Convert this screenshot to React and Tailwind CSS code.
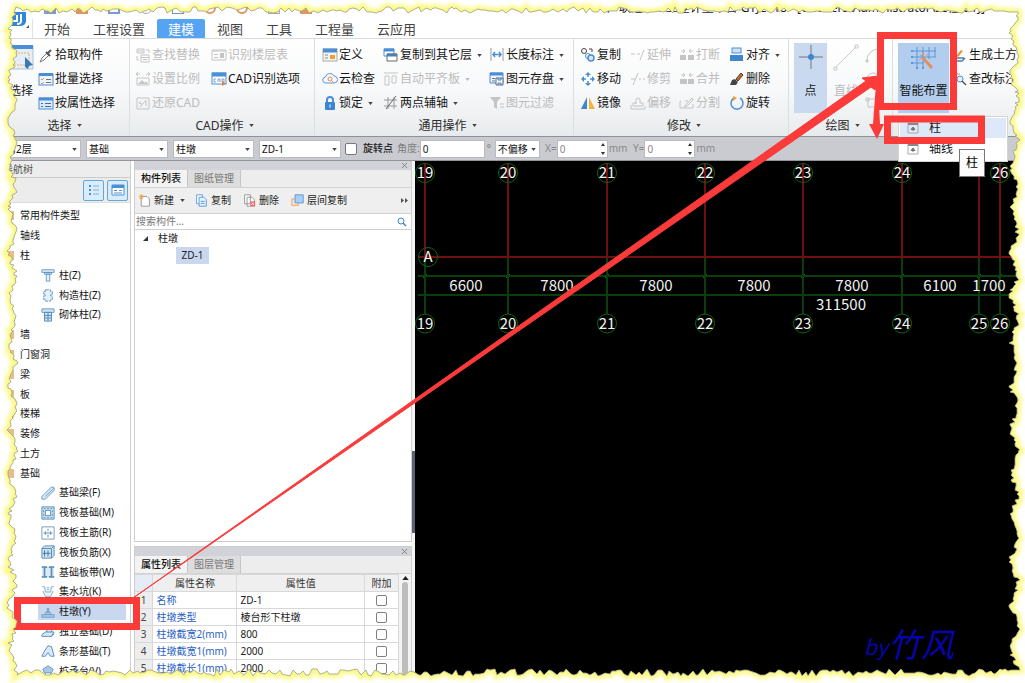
import { useState } from "react";

const TABS = ["开始", "工程设置", "建模", "视图", "工具", "工程量", "云应用"];

const BLUE = "#4a8fd6";
const GREY = "#c4c4c4";

const ICONS = {
  picker: (
    <>
      <path d="M2 15l2-4 5-5 2 2-5 5z" fill="#fff" stroke="#777" />
      <path d="M8 5l4 4M10 6l3-3" stroke="#555" strokeWidth="2" />
    </>
  ),
  batch: (
    <>
      <rect x="1" y="3" width="14" height="11" fill="#eef4fb" stroke={BLUE} />
      <path d="M1 3.5h14" stroke={BLUE} strokeWidth="3" />
      <path d="M3 8l1 1 2-2M3 12l1 1 2-2" stroke="#e29a3c" />
      <path d="M8 8.5h5M8 11.5h5" stroke="#777" />
    </>
  ),
  byProp: (
    <>
      <rect x="1" y="3" width="14" height="11" fill="#dceafa" stroke={BLUE} />
      <path d="M1 4h14" stroke={BLUE} strokeWidth="3" />
      <path d="M3 8.5h2M3 11.5h2M7 8.5h6M7 11.5h6" stroke="#3a6ea5" />
    </>
  ),
  findReplace: (
    <>
      <path d="M2 2h7v4H2zM2 4h7M6 8h8v7H6zM6 10.500h8M8 12.500h4" stroke={GREY} />
      <path d="M11 3h3v3M2 9v4h2" stroke={GREY} />
    </>
  ),
  floorTable: (
    <>
      <path d="M1 3h14v10H1zM1 4h14M3 7.500h4M3 10.500h4" stroke={GREY} />
      <path d="M9 6h4v5H9z" fill={GREY} />
    </>
  ),
  ratio: (
    <>
      <path d="M1 3h4M11 3h4M3 1L1 3l2 2M13 1l2 2-2 2" stroke={GREY} />
      <path d="M2 7h12v7H2z" stroke={GREY} />
      <path d="M3 13l4-4 3 3 1-2 2 3z" fill={GREY} />
    </>
  ),
  cadOptions: (
    <>
      <rect x="1" y="2" width="14" height="11" fill="#fff" stroke={BLUE} />
      <path d="M1 3.5h14" stroke={BLUE} strokeWidth="4" />
      <path d="M5 8H3v3h2M7 11V8h2v3M11 8v3h2V8z" stroke="#7aa5cf" />
      <path d="M11 10l4 2.500-4 2.500z" fill="#f07840" />
    </>
  ),
  restore: (
    <>
      <path d="M2 3h12v11H2z" stroke={GREY} />
      <path d="M5 12l6-7M6 6l-2 2 3 1M11 5v6" stroke={GREY} />
    </>
  ),
  define: (
    <>
      <rect x="1" y="2" width="14" height="12" fill="#f4f4f4" stroke="#aaa" />
      <path d="M1 3.5h14" stroke={BLUE} strokeWidth="4" />
      <path d="M3 8h3M3 11h3" stroke="#888" />
      <rect x="8" y="8" width="5" height="4" fill="#efa02f" />
    </>
  ),
  cloud: (
    <>
      <path d="M4 12a3 3 0 01-.5-6A4.500 4.500 0 0112 5a3.500 3.500 0 010 7z" fill="#f2f8fe" stroke="#5d9bd8" />
      <circle cx="8" cy="8" r="2" stroke="#ee8a48" />
      <path d="M9.500 9.500l2 2" stroke="#ee8a48" />
    </>
  ),
  lock: (
    <>
      <path d="M5 8V5a3 3 0 016 0v3" stroke={BLUE} strokeWidth="2" />
      <rect x="3" y="7" width="10" height="8" rx="1" fill="#3b85d6" />
      <path d="M8 9.500v3" stroke="#fff" />
    </>
  ),
  copyFloor: (
    <>
      <path d="M1 2h10v7H1z" fill="#fff" stroke={BLUE} />
      <path d="M1 3h10" stroke={BLUE} strokeWidth="3" />
      <path d="M4 7h10v7H4z" fill="#fff" stroke="#666" />
      <path d="M4 8h10" stroke="#4d7fb5" strokeWidth="3" />
    </>
  ),
  alignSlab: <path d="M1 2h14M2 5h4v9H2zM9 5h4v7H9z" stroke={GREY} />,
  axis: (
    <>
      <path d="M5 2v12M11 2v12M1 5h13M1 11h13" stroke="#999" />
      <path d="M3 14L13 1" stroke="#666" />
    </>
  ),
  dimension: (
    <>
      <path d="M2 1v13M14 1v13" stroke="#999" />
      <path d="M4 7.500h8M6 5L4 7.500 6 10M10 5l2 2.500-2 2.500" stroke={BLUE} strokeWidth="1.500" />
    </>
  ),
  store: (
    <>
      <path d="M1 2h13v10H1z" fill="#eef5fc" stroke={BLUE} />
      <path d="M1 3h13" stroke={BLUE} strokeWidth="3" />
      <path d="M3 7.500h3M3 10h3" stroke="#777" />
      <path d="M7 7h7v7H7z" fill="#fff" stroke="#4a6f97" />
      <path d="M9 7v2h3V7M9 14v-2h3v2" stroke="#4a6f97" />
    </>
  ),
  filter: (
    <>
      <path d="M1 2h11l-4 5v7l-3-2V7z" fill={GREY} />
      <path d="M11 9h4M11 12h4" stroke={GREY} />
    </>
  ),
  copy: (
    <>
      <circle cx="4" cy="4" r="2.500" stroke="#444" />
      <circle cx="8" cy="9" r="2.500" fill="#fff" stroke={BLUE} />
      <circle cx="11" cy="11" r="3" fill="#d6e8fa" stroke={BLUE} strokeWidth="1.500" />
      <path d="M9 2h3v3" stroke="#444" />
    </>
  ),
  move: (
    <>
      <path d="M8 3v3M8 10v3M3 8h3M10 8h3" stroke={BLUE} strokeWidth="1.500" />
      <path d="M8 1l3 3H5zM8 15l3-3H5zM1 8l3-3v6zM15 8l-3-3v6z" fill={BLUE} />
    </>
  ),
  mirror: (
    <>
      <path d="M7 2v12H1z" fill="#3f86cf" />
      <path d="M9 2v12h6z" fill="#f0b53c" />
    </>
  ),
  extend: <path d="M1 7h4M7 7h3M10 13l4-10" stroke={GREY} />,
  trim: <path d="M1 8h4M9 8h2M13 8h2M3 14L8 2" stroke={GREY} />,
  offset: <path d="M6 9V5a2 2 0 014 0v3h3v3H3V8h3M1 10v4h14v-3" stroke={GREY} />,
  breakIcon: (
    <>
      <path d="M1 8h6v5H1zM9 8h6v5H9z" fill={GREY} />
      <path d="M2 4h3M11 4h3M4 2l2 2-2 2M12 2l-2 2 2 2" stroke={GREY} />
    </>
  ),
  merge: (
    <>
      <path d="M1 8h7v5H1zM9 8h6v5H9z" fill={GREY} />
      <path d="M2 4h4M10 4h4M4 2l2 2-2 2M12 2l-2 2 2 2" stroke={GREY} />
    </>
  ),
  split: <path d="M2 6H1v7h13V9M5 12l8-9 1 2-7 7zM6 6h3" stroke={GREY} />,
  align: (
    <>
      <rect x="3" y="1" width="9" height="5" fill="#cde2f7" stroke={BLUE} />
      <rect x="1" y="8" width="13" height="6" fill="#3f86cf" />
    </>
  ),
  erase: (
    <>
      <path d="M7 8l5-6 2 2-5 6z" fill="#b0703c" stroke="#6b3a1c" />
      <path d="M3 9l3-1 3 3-2 3H1z" fill="#444" />
    </>
  ),
  rotate: (
    <>
      <path d="M5 3a6 6 0 106-0" stroke={BLUE} strokeWidth="1.500" />
      <path d="M4 1l4 2-4 3z" fill="#ee9a3c" />
    </>
  ),
  earth: (
    <>
      <path d="M4 9l5-6 2 1-5 6z" fill="#ee8f3a" />
      <path d="M1 8l2 3h9M1 14h9l3-3" stroke="#4a7fb5" strokeWidth="1.500" />
    </>
  ),
  checkNote: (
    <>
      <path d="M2 3h6M2 6h3" stroke="#ee8f3a" />
      <circle cx="8" cy="8" r="3" fill="#e7f2fd" stroke={BLUE} />
      <path d="M10 10l4 4" stroke="#555" strokeWidth="1.500" />
    </>
  ),
  newDoc: (
    <>
      <path d="M4 3h7l3 3v9H4z" fill="#fff" stroke="#888" />
      <path d="M4 0v7M1 3.500h6M2 1l4 5M6 1L2 6" stroke="#f0a02c" />
    </>
  ),
  copyDoc: (
    <>
      <path d="M2 1h7v11H2z" fill="#fff" stroke={BLUE} />
      <path d="M5 4h6l3 3v8H5z" fill="#e6f1fc" stroke={BLUE} />
      <path d="M7 9h5M7 11.500h5" stroke={BLUE} />
    </>
  ),
  deleteDoc: (
    <>
      <path d="M2 1h7v11H2zM5 4h6l3 3v8H5z" fill="#fff" stroke="#888" />
      <path d="M9 9h6v6H9z" fill="#e8686c" />
      <path d="M10.500 10.500l3 3M13.500 10.500l-3 3" stroke="#fff" />
    </>
  ),
  layerCopy: (
    <>
      <path d="M1 6h8v8H1z" fill="#f7e3d0" stroke="#ee9a50" />
      <path d="M5 1h10v10H5z" fill="#a9cff5" stroke={BLUE} />
    </>
  ),
  column: <path d="M1 2h14v3H1zM4 5h8v2H4zM6 7h4v8H6z" fill="#e4f0fa" stroke="#5b93bd" />,
  structColumn: <path d="M5 2h6v2h2v3h-2v2h2v4h-2v2H5v-2H3V9h2V7H3V4h2z" fill="#e4f0fa" stroke="#5b93bd" strokeDasharray="4 1" />,
  masonryColumn: (
    <>
      <path d="M1 1h14v4H1z" fill="#cfe2f2" stroke="#5b93bd" />
      <path d="M4 5h8v10H4zM4 8.500h8M4 11.500h8M8 5v10" fill="#cfe2f2" stroke="#4a86b5" />
    </>
  ),
  beam: <path d="M1 12L12 1l3 1v3L5 15H1z M5 12L14 3" fill="#d8e9f7" stroke="#5b93bd" />,
  raft: (
    <>
      <path d="M1 1h14v14H1z" fill="#cfe2f2" stroke="#4a86b5" />
      <path d="M5 5h6v6H5z" fill="#fff" stroke="#4a86b5" />
      <path d="M3 3h10v10H3z" stroke="#4a86b5" strokeDasharray="2 2" />
    </>
  ),
  raftMain: (
    <>
      <path d="M1 1h14v14H1z" fill="#fff" stroke="#6d93b0" />
      <path d="M8 3v3M8 10v3M3 8h10M5 6v4M11 6v4" stroke="#4a86b5" />
    </>
  ),
  raftNeg: (
    <>
      <path d="M1 4h11v11H1zM1 4l3-3h11v11l-3 3M12 4l3-3" fill="#cfe2f2" stroke="#4a86b5" />
      <path d="M4 6v7M8 6v7M2 9.500h9" stroke="#37719f" />
    </>
  ),
  strip: (
    <>
      <path d="M1 2h14v12H1z" fill="#deebf6" />
      <path d="M1 2.500h6M9 2.500h6M1 13.500h6M9 13.500h6M4 3v10M12 3v10" stroke="#5b93bd" strokeWidth="2" />
    </>
  ),
  pit: <path d="M1 2h3l1 6h6l1-6h3M2 7l3 6h6l3-6M7 3h2M7 5h2" fill="#e9f3fb" stroke="#7fa8c6" />,
  pier: <path d="M1 11h14v3H1zM4 11l2-3h4l2 3M7 4h2v4H7z" fill="#a9c8e4" stroke="#6c9cc4" />,
  isolated: <path d="M1 11l4-3h10l-3 5H1zM6 8l2-4h5l-1 4M12 13l3-3" fill="#d8e9f7" stroke="#4a86b5" />,
  stripFound: <path d="M1 14l3-6 4-6 4 1 3 11h-4l-3-4-3 4z" fill="#d8e9f7" stroke="#4a86b5" />,
  pileCap: <path d="M8 2l6 4-2 4H4L2 6zM5 10v5M11 10v5" fill="#a9c8e4" stroke="#5b93bd" />,
};

function Icon({ name, size = "size-4" }) {
  return (
    <svg viewBox="0 0 16 16" fill="none" className={`${size} shrink-0`}>
      {ICONS[name]}
    </svg>
  );
}

function Caret({ className = "text-[#444]" }) {
  return (
    <svg viewBox="0 0 6 4" className={`w-[5px] h-[3px] shrink-0 ${className}`}>
      <path d="M0 0h6L3 4z" fill="currentColor" />
    </svg>
  );
}

function Command({ icon, label, disabled, caret }) {
  return (
    <button
      disabled={disabled}
      className={`flex items-center h-6 text-[12px] whitespace-nowrap ${disabled ? "text-[#bcbcbc]" : "text-[#161616]"}`}
    >
      <Icon name={icon} />
      <span className="px-px">{label}</span>
      {caret && <span className="pl-[4px]"><Caret className={disabled ? "text-[#bbb]" : "text-[#444]"} /></span>}
    </button>
  );
}

function Group({ label, className, children }) {
  return (
    <section className={`relative flex flex-col shrink-0 border-r border-[#dcdfe2] pt-[4px] ${className}`}>
      <div className="flex h-[72px]">{children}</div>
      <div className="flex flex-1 items-center justify-center gap-[5px] text-[12px] text-[#2b2b2b]">
        {label}
        <Caret />
      </div>
    </section>
  );
}

function Column({ className = "", items }) {
  return (
    <div className={`flex flex-col shrink-0 ${className}`}>
      {items.map(([icon, label, disabled, caret]) => (
        <Command key={label} icon={icon} label={label} disabled={disabled} caret={caret} />
      ))}
    </div>
  );
}

function MenuIcon() {
  return (
    <svg viewBox="0 0 12 12" fill="none" className="size-3">
      <path d="M1 1h10v10H1z" stroke="#aaa" />
      <path d="M1 2h10" stroke="#888" strokeWidth="2" />
      <path d="M6 5l2 2.500H4zM6 7v2" fill="#777" stroke="#777" />
    </svg>
  );
}

function Ribbon() {
  return (
    <div className="flex h-[99px] shrink-0 border-y border-t-[#dadada] border-b-[#8f9196] bg-gradient-to-b from-white via-[#f8f9fa] to-[#e8ebed]">
      <Group label="选择" className="w-[130px]">
        <button className="flex flex-col items-center w-[38px] pl-[4px] pt-px text-[12px] text-[#222]">
          <svg viewBox="0 0 26 26" fill="none" className="size-[26px]">
            <path d="M1 2h24v23H1z" fill="#e6eff9" stroke="#a9c1dc" />
            <path d="M1 3h24" stroke={BLUE} strokeWidth="4" />
            <path d="M4 9h17v12H4z" stroke="#e8b04c" strokeDasharray="2 1" />
            <path d="M17 13l8 8-4 1-1 3-3-2z" fill="#3a76b8" />
          </svg>
          <span className="whitespace-nowrap pt-[12px]">选择</span>
        </button>
        <Column
          items={[["picker", "拾取构件"], ["batch", "批量选择"], ["byProp", "按属性选择"]]}
        />
      </Group>
      <Group label="CAD操作" className="w-[185px] pl-[5px]">
        <Column
          className="w-[76px]"
          items={[["findReplace", "查找替换", true], ["ratio", "设置比例", true], ["restore", "还原CAD", true]]}
        />
        <Column items={[["floorTable", "识别楼层表", true], ["cadOptions", "CAD识别选项"]]} />
      </Group>
      <Group label="通用操作" className="w-[259px] pl-[7px]">
        <Column className="w-[61px]" items={[["define", "定义"], ["cloud", "云检查"], ["lock", "锁定", false, true]]} />
        <Column
          className="w-[106px]"
          items={[["copyFloor", "复制到其它层", false, true], ["alignSlab", "自动平齐板", true, true], ["axis", "两点辅轴", false, true]]}
        />
        <Column
          items={[["dimension", "长度标注", false, true], ["store", "图元存盘", false, true], ["filter", "图元过滤", true]]}
        />
      </Group>
      <Group label="修改" className="w-[215px] pl-[6px]">
        <Column className="w-[50px]" items={[["copy", "复制"], ["move", "移动"], ["mirror", "镜像"]]} />
        <Column className="w-[49px]" items={[["extend", "延伸", true], ["trim", "修剪", true], ["offset", "偏移", true]]} />
        <Column className="w-[50px]" items={[["breakIcon", "打断", true], ["merge", "合并", true], ["split", "分割", true]]} />
        <Column items={[["align", "对齐", false, true], ["erase", "删除"], ["rotate", "旋转"]]} />
      </Group>
      <Group label="绘图" className="w-[104px] pl-[5px] pr-px">
        <button className="flex flex-col items-center w-[33px] h-[70px] bg-[#c9d9ef] text-[12px] text-[#161616]">
          <svg viewBox="0 0 28 28" className="size-7" fill="none">
            <path d="M14 2v24M2 14h24" stroke="#777" />
            <circle cx="14" cy="14" r="3" fill="#3d86d6" />
          </svg>
          <span className="pt-[11px]">点</span>
        </button>
        <button disabled className="flex flex-col items-center w-[38px] text-[12px] text-[#bcbcbc]">
          <svg viewBox="0 0 28 28" className="size-7" fill="none">
            <path d="M4 24L24 4M2 24h3v3H2zM23 2h3v3h-3z" stroke="#c8c8c8" />
          </svg>
          <span className="pt-[11px]">直线</span>
        </button>
        <div className="flex flex-col">
          <button disabled aria-label="弧" className="h-6 w-4">
            <svg viewBox="0 0 16 16" fill="none" className="size-4"><path d="M2 14C2 7 7 2 14 2M1 13h2v2H1z" stroke={GREY} /></svg>
          </button>
          <button disabled aria-label="圆" className="h-6 w-4">
            <svg viewBox="0 0 16 16" fill="none" className="size-4"><circle cx="8" cy="8" r="6" stroke={GREY} /></svg>
          </button>
          <button disabled aria-label="矩形" className="h-6 w-4">
            <svg viewBox="0 0 16 16" fill="none" className="size-4"><path d="M3 4h10v8H3zM1 3h3v3H1z" stroke={GREY} /></svg>
          </button>
        </div>
      </Group>
      <section className="relative flex flex-1 pl-[5px] pt-1">
        <button className="flex flex-col items-center w-[51px] h-[70px] shrink-0 bg-[#b3cdee] text-[12px] text-[#111] whitespace-nowrap">
          <svg viewBox="0 0 28 28" className="size-7" fill="none">
            <path d="M7 4v20M13 4v20M19 4v12M25 4v10M2 8h24M2 14h24M2 20h12" stroke="#5c97d6" />
            <path d="M1 7h2v2H1zM1 13h2v2H1zM1 19h2v2H1zM6 24h2v2H6zM12 24h2v2h-2z" fill="#5c97d6" />
            <path d="M13 15l9 10" stroke="#e0905a" strokeWidth="3" />
            <path d="M10 12l3 1M13 9l1 3M18 11l-2 2M9 17l3-2" stroke="#e0905a" />
          </svg>
          <span className="pt-[11px]">智能布置</span>
        </button>
        <div className="flex flex-col pl-[3px]">
          <Command icon="earth" label="生成土方" />
          <Command icon="checkNote" label="查改标注" />
        </div>
        <div role="menu" className="absolute left-[5px] top-[77px] z-10 w-[110px] border border-[#d5d5d5] bg-white p-px text-[12px] text-[#161616]">
          <button role="menuitem" className="flex items-center w-full h-5 gap-[10px] pl-[7px] bg-[#dde8f8]">
            <MenuIcon />柱
          </button>
          <button role="menuitem" className="flex items-center w-full h-[22px] gap-[10px] pl-[7px]">
            <MenuIcon />轴线
          </button>
        </div>
        <div role="tooltip" className="absolute left-[66px] top-[110px] z-20 w-[26px] h-7 border border-[#777] bg-[#fcfcfd] text-[12px] leading-[26px] text-center text-black">
          柱
        </div>
      </section>
    </div>
  );
}

function Dropdown({ label, value, className }) {
  return (
    <div className={`relative shrink-0 ${className}`}>
      <select aria-label={label} className="block w-full h-[18px] appearance-none bg-white border border-[#b9bbc0] pl-[2px] text-[10px] leading-4 text-[#111]">
        <option>{value}</option>
      </select>
      <span className="absolute right-[4px] top-[8px] pointer-events-none flex"><Caret /></span>
    </div>
  );
}

function Stepper({ label }) {
  return (
    <div className="flex items-center text-[10px] text-[#8a8a8a]">
      <label htmlFor={`offset-${label}`} className="w-[13px] text-right">{label}=</label>
      <div className="relative">
        <input id={`offset-${label}`} defaultValue="0" className="block w-[51px] h-[18px] bg-white border border-[#b9bbc0] pl-[2px] text-[10px]" />
        <svg viewBox="0 0 6 12" className="absolute right-[2px] top-[3px] w-[6px] h-3">
          <path d="M1 3l2-3 2 3zM1 9l2 3 2-3z" fill="#333" />
        </svg>
      </div>
      <span className="pl-px">mm</span>
    </div>
  );
}

function OptionsBar() {
  return (
    <div className="flex items-center h-6 shrink-0 bg-[#c9cbd1] border-b border-[#93959b] text-[10px] text-[#222]">
      <div className="flex gap-[5px]">
        <Dropdown label="楼层" value="第2层" className="w-[81px] pl-[3px]" />
        <Dropdown label="构件类别" value="基础" className="w-[82px]" />
        <Dropdown label="构件类型" value="柱墩" className="w-[81px]" />
        <Dropdown label="构件" value="ZD-1" className="w-[82px]" />
      </div>
      <label className="flex items-center pl-[4px] font-medium">
        <input type="checkbox" className="appearance-none size-[12px] mr-[6px] rounded-[2px] border border-[#777] bg-white" />
        旋转点
      </label>
      <label htmlFor="angle" className="pl-[4px] text-[#808080]">角度:</label>
      <input id="angle" defaultValue="0" className="w-[65px] h-[18px] bg-white border border-[#b9bbc0] px-[2px] text-[10px]" />
      <span className="w-[10px] pl-[2px] text-[#777]">°</span>
      <Dropdown label="偏移方式" value="不偏移" className="w-[45px] mr-[4px]" />
      <div className="flex gap-[4px]">
        <Stepper label="X" />
        <Stepper label="Y" />
      </div>
    </div>
  );
}

const TREE = [
  { label: "常用构件类型" },
  { label: "轴线" },
  { label: "柱" },
  { label: "柱(Z)", icon: "column" },
  { label: "构造柱(Z)", icon: "structColumn" },
  { label: "砌体柱(Z)", icon: "masonryColumn" },
  { label: "墙" },
  { label: "门窗洞" },
  { label: "梁" },
  { label: "板" },
  { label: "楼梯" },
  { label: "装修" },
  { label: "土方" },
  { label: "基础" },
  { label: "基础梁(F)", icon: "beam" },
  { label: "筏板基础(M)", icon: "raft" },
  { label: "筏板主筋(R)", icon: "raftMain" },
  { label: "筏板负筋(X)", icon: "raftNeg" },
  { label: "基础板带(W)", icon: "strip" },
  { label: "集水坑(K)", icon: "pit" },
  { label: "柱墩(Y)", icon: "pier" },
  { label: "独立基础(D)", icon: "isolated" },
  { label: "条形基础(T)", icon: "stripFound" },
  { label: "桩承台(V)", icon: "pileCap" },
];

function NavTree() {
  const [selected, setSelected] = useState("柱墩(Y)");
  return (
    <nav className="flex flex-col w-[131px] shrink-0 border-r border-[#cfcfcf] bg-white text-[10px] text-[#161616]">
      <div className="flex items-center h-[17px] pl-[3px] bg-[#ededed] border-b border-[#cccccc] text-[#555]">导航树</div>
      <div className="flex items-center justify-end h-[25px] gap-[3px] pr-[2px] bg-[#ececec] border-b border-[#dddddd]">
        <button aria-label="列表" className="flex items-center justify-center size-[21px] rounded-[2px] border border-[#62a8dc] bg-[#d9ecfb]">
          <svg viewBox="0 0 14 14" fill="none" className="size-[14px]">
            <path d="M2 3h2M2 7h2M2 11h2" stroke={BLUE} strokeWidth="2" />
            <path d="M6 3h6M6 7h6M6 11h6" stroke="#8bafcc" />
          </svg>
        </button>
        <button aria-label="视图" className="flex items-center justify-center size-[21px] rounded-[2px] border border-[#62a8dc] bg-[#d9ecfb]">
          <svg viewBox="0 0 14 14" fill="none" className="size-[14px]">
            <path d="M1 2h12v10H1z" fill="#fff" stroke={BLUE} />
            <path d="M1 3.500h12M8 3.500h4" stroke={BLUE} strokeWidth="3" />
            <path d="M3 7.500h3M8 7.500h3M3 10h8" stroke="#5a8fc0" />
          </svg>
        </button>
      </div>
      <ul className="grid flex-1 auto-rows-fr min-h-0 pt-[3px] pb-[2px]">
        {TREE.map((n) =>
          n.icon ? (
            <li key={n.label} className="flex min-h-0 items-center pl-[38px] pr-[4px]">
              <button
                onClick={() => setSelected(n.label)}
                className={`flex items-center w-full h-4 gap-[4px] pl-[3px] whitespace-nowrap ${selected === n.label ? "bg-[#c9d8ef]" : ""}`}
              >
                <Icon name={n.icon} size="size-[14px]" />
                {n.label}
              </button>
            </li>
          ) : (
            <li key={n.label} className="flex min-h-0 items-center gap-[6px] pl-[4px]">
              <span className="w-[10px] h-[9px] bg-[#e9bd86]" />
              {n.label}
            </li>
          )
        )}
      </ul>
    </nav>
  );
}

function PanelTabs({ tabs }) {
  return (
    <>
      <div className="flex items-center justify-end h-[9px] shrink-0 bg-[#d2d3d9] pr-[4px]">
        <button aria-label="关闭" className="size-[5px]">
          <svg viewBox="0 0 6 6" className="size-[5px]"><path d="M0 0l6 6M6 0L0 6" stroke="#777" /></svg>
        </button>
      </div>
      <div role="tablist" className="flex h-[18px] shrink-0 bg-[#ededed] border-b border-[#d2d2d2] text-[10px]">
        <button role="tab" aria-selected="true" className="px-[6px] font-medium text-[#111] bg-[#f3f3f3]">{tabs[0]}</button>
        <button role="tab" aria-selected="false" className="px-[6px] text-[#777] bg-[#dddddd] border-x border-[#c6c6c6]">{tabs[1]}</button>
      </div>
    </>
  );
}

function ToolButton({ icon, label, className = "" }) {
  return (
    <button className={`flex items-center gap-[3px] shrink-0 ${className}`}>
      <Icon name={icon} size="size-[13px]" />
      {label}
    </button>
  );
}

const PROPS = [
  ["名称", "ZD-1"],
  ["柱墩类型", "棱台形下柱墩"],
  ["柱墩截宽2(mm)", "800"],
  ["柱墩截宽1(mm)", "2000"],
  ["柱墩截长1(mm)", "2000"],
];

function SidePanels() {
  return (
    <div className="flex flex-col w-[278px] ml-[3px] shrink-0 gap-[4px] overflow-hidden text-[10px] text-[#222]">
      <section className="flex flex-col h-[381px] shrink-0 border border-t-0 border-[#cdced2] bg-white">
        <PanelTabs tabs={["构件列表", "图纸管理"]} />
        <div className="flex items-center h-[25px] shrink-0 bg-[#efefef] px-[3px]">
          <ToolButton icon="newDoc" label="新建" />
          <span className="pl-[6px] pr-[10px]"><Caret /></span>
          <ToolButton icon="copyDoc" label="复制" className="mr-[12px]" />
          <ToolButton icon="deleteDoc" label="删除" className="mr-[12px]" />
          <ToolButton icon="layerCopy" label="层间复制" />
          <svg viewBox="0 0 7 5" className="ml-auto w-[7px] h-[5px]"><path d="M0 0l3 2.500-3 2.500zM4 0l3 2.500-3 2.500z" fill="#555" /></svg>
        </div>
        <div className="flex items-center h-[17px] shrink-0 border-y border-[#d0d0d0] pl-px pr-[4px]">
          <input aria-label="搜索构件" placeholder="搜索构件..." className="flex-1 text-[10px] placeholder:text-[#777] outline-none" />
          <svg viewBox="0 0 10 10" fill="none" className="size-[10px]">
            <circle cx="4" cy="4" r="3" stroke="#3a8ad0" />
            <path d="M6 6l3 3" stroke="#3a8ad0" strokeWidth="1.500" />
          </svg>
        </div>
        <div className="flex items-center h-[17px] gap-[10px] pl-[8px]">
          <svg viewBox="0 0 6 6" className="size-[5px]"><path d="M6 0v6H0z" fill="#333" /></svg>
          柱墩
        </div>
        <button className="ml-[41px] w-[33px] h-[17px] bg-[#c9d8ef]">ZD-1</button>
      </section>
      <section className="flex flex-col flex-1 min-h-0 overflow-hidden border border-b-0 border-[#cdced2] bg-white">
        <PanelTabs tabs={["属性列表", "图层管理"]} />
        <div className="flex min-h-0">
          <table className="flex-1 table-fixed border-collapse text-left leading-4">
            <colgroup>
              <col className="w-[18px]" />
              <col className="w-[84px]" />
              <col className="w-[128px]" />
              <col className="w-[34px]" />
            </colgroup>
            <thead>
              <tr className="h-[17px] bg-[#efefef] text-center text-[#333]">
                <th className="border border-[#d8d8d8] border-l-0 bg-[#e6ecf5] p-0" />
                <th className="border border-[#d8d8d8] p-0 font-normal">属性名称</th>
                <th className="border border-[#d8d8d8] p-0 font-normal">属性值</th>
                <th className="border border-[#d8d8d8] p-0 font-normal">附加</th>
              </tr>
            </thead>
            <tbody>
              {PROPS.map(([name, value], i) => (
                <tr key={name} className="h-[17px]">
                  <td className="border border-[#d8d8d8] border-l-0 bg-[#ededed] p-0 text-center text-[#444]">{i + 1}</td>
                  <td className="border border-[#d8d8d8] p-0 pl-[3px] text-[#2a5fc4] whitespace-nowrap">{name}</td>
                  <td className="border border-[#d8d8d8] p-0 pl-[3px]">{value}</td>
                  <td className="border border-[#d8d8d8] p-0">
                    <input type="checkbox" aria-label={`附加 ${name}`} className="block mx-auto appearance-none size-[11px] rounded-[2px] border border-[#808080]" />
                  </td>
                </tr>
              ))}
            </tbody>
          </table>
          <div className="flex flex-col items-center w-[12px] bg-[#f3f3f3] pt-[2px] gap-[2px]">
            <svg viewBox="0 0 8 5" className="w-[7px] h-[4px]"><path d="M0 5l4-5 4 5z" fill="#222" /></svg>
            <div className="flex-1 w-[6px] rounded-t-[3px] bg-[#bdbdbd]" />
          </div>
        </div>
      </section>
    </div>
  );
}

const AXES = [
  [425, "19"], [508, "20"], [607, "21"], [705, "22"], [803, "23"], [902, "24"], [979, "25"], [1000, "26"],
];

const SPANS = [
  [466, "6600"], [557, "7800"], [656, "7800"], [754, "7800"], [852, "7800"], [940, "6100"], [989, "1700"],
];

function Drawing() {
  return (
    <svg className="flex-1 min-w-0 h-full bg-black font-['Noto_Sans_CJK_SC',sans-serif] text-[15px]" fill="none">
      <g transform="translate(-415 -161)">
        {AXES.map(([x, n]) => (
          <g key={n}>
            <path d={`M${x} 164V257`} stroke="#6e1010" strokeWidth="2" />
            <path d={`M${x} 257V314`} stroke="#0a3f0d" strokeWidth="2" />
            <path d={`M${x - 2} 278l4-4`} stroke="#0d7a14" />
            {n !== "25" && <circle cx={x} cy="173" r="9.5" stroke="#0f6414" />}
            <circle cx={x} cy="323.5" r="9.5" stroke="#0f6414" />
          </g>
        ))}
        <path d="M418 257H1025" stroke="#6e1010" strokeWidth="2" />
        <path d="M418 276H1025M418 295H1025" stroke="#0a3f0d" strokeWidth="2" />
        <circle cx="428" cy="257" r="9.5" stroke="#0f6414" />
        <g fill="#f2f2f2" textAnchor="middle">
          <text x="428" y="262">A</text>
          {AXES.map(([x, n]) => (
            <g key={n}>
              {n !== "25" && <text x={x} y="178">{n}</text>}
              <text x={x} y="329">{n}</text>
            </g>
          ))}
          {SPANS.map(([x, n]) => (
            <text key={x} x={x} y="291">{n}</text>
          ))}
          <text x="841" y="310">311500</text>
        </g>
        <g fill="#0505ad" fontStyle="italic">
          <text x="864" y="655" fontSize="21">by</text>
          <text x="888" y="657" fontSize="33">竹风</text>
        </g>
      </g>
    </svg>
  );
}

const RED = "#fb3a3a";

function Annotations() {
  return (
    <svg className="absolute inset-0 z-30 size-full pointer-events-none" fill="none">
      <path d="M133 598L866 81 862 78 878 76 875 90 871 87z" fill={RED} stroke={RED} strokeLinejoin="round" />
      <path d="M876 84h2l2 40h4l-7 15-8-15h4z" fill={RED} />
      <g stroke={RED} strokeWidth="7">
        <rect x="880.5" y="35.5" width="73" height="71" />
        <rect x="887.5" y="119" width="94" height="21.5" />
        <rect x="17.5" y="600.5" width="119" height="26" />
      </g>
    </svg>
  );
}

// ragged paper edge, seeded so that it stays the same between renders
function tornPath(w, h) {
  let seed = 7;
  const rnd = () => {
    seed = (seed * 16807) % 2147483647;
    return seed / 2147483647;
  };
  const pts = [];
  for (let x = 16; x < w - 16; x += 2 + rnd() * 3) pts.push([x, 7 + rnd() * 6]);
  for (let y = 12; y < h - 12; y += 1 + rnd() * 3) pts.push([w - 12 + Math.sin(y / 7) * 3 + rnd() * 5 - 1, y]);
  for (let x = w - 14; x > 16; x -= 2 + rnd() * 3) pts.push([x, h - 7 - rnd() * 7]);
  for (let y = h - 10; y > 12; y -= 1 + rnd() * 3) pts.push([11 + Math.sin(y / 7) * 3 + rnd() * 5 - 1, y]);
  return "M" + pts.map((p) => p.map(Math.round).join(" ")).join("L") + "Z";
}

const EDGE = tornPath(1025, 683);
const OUTSIDE = `M0 0H1025V683H0Z${EDGE}`;

function TornFrame() {
  return (
    <svg viewBox="0 0 1025 683" preserveAspectRatio="none" className="absolute inset-0 z-40 size-full pointer-events-none" fill="none">
      <defs>
        <clipPath id="outside"><path d={OUTSIDE} clipRule="evenodd" /></clipPath>
        <filter id="glow" x="-5%" y="-5%" width="110%" height="110%"><feGaussianBlur stdDeviation="2" /></filter>
      </defs>
      <g clipPath="url(#outside)">
        <path d="M0 0H1025V683H0Z" fill="#fff" />
        <path d={EDGE} stroke="#fbf97c" strokeWidth="7" filter="url(#glow)" />
      </g>
      <path d={EDGE} stroke="#9c9c8c" strokeWidth="0.8" />
    </svg>
  );
}

export default function App() {
  const [tab, setTab] = useState("建模");
  return (
    <div className="relative flex flex-col w-full h-screen overflow-hidden bg-white font-['Noto_Sans','Noto_Sans_CJK_SC',sans-serif]">
      <header className="flex flex-col h-[38px] shrink-0">
        <div className="flex items-center justify-between h-[19px] pl-[44px] pr-[40px] text-[12px] leading-3 text-[#222]">
          <div className="flex gap-[20px] pb-[4px]">
            <span className="size-3 bg-[#7a9cd0]" />
            <span className="size-3 bg-[#e29560]" />
            <span className="size-3 border-2 border-[#7a9cd0]" />
            <span className="size-3 rounded-full border border-[#aaa]" />
            <span className="size-3 border border-[#6c98cc]" />
            <span className="size-3 rounded-full border-2 border-[#e29560]" />
            <span className="size-3 rounded-full border-2 border-[#e29560]" />
            <span className="size-3 border border-[#aaa]" />
            <span className="size-3 bg-[#e29560]" />
          </div>
          <h1 className="pb-[4px] whitespace-nowrap">广联达BIM土建计量平台 GTJ2018 - [C:\Users\Administrator\工程.GTJ]</h1>
        </div>
        <div className="flex h-[19px]">
          <div className="flex items-start w-[33px] shrink-0 border-r border-[#e2e2e2]">
            <svg viewBox="0 0 33 19" fill="none" className="w-[33px] h-[19px] overflow-visible">
              <path d="M4-7h22v9a5 5 0 01-5 5H4z" fill="#2f86dd" />
              <path d="M10 2h7V-4M21-5v7q0 3-4 3" stroke="#fff" strokeWidth="2" />
              <path d="M29 6v3h-3z" fill="#555" />
            </svg>
          </div>
          <nav className="flex gap-px">
            {TABS.map((t) => (
              <button
                key={t}
                onClick={() => setTab(t)}
                className={`px-[11px] text-[13px] leading-[20px] whitespace-nowrap ${tab === t ? "bg-[#57a3f3] text-white rounded-t-[2px]" : "text-[#444]"}`}
              >
                {t}
              </button>
            ))}
          </nav>
        </div>
      </header>
      <Ribbon />
      <OptionsBar />
      <main className="flex flex-1 min-h-0">
        <NavTree />
        <SidePanels />
        <div className="flex flex-col items-center w-[3px] shrink-0 bg-[#f5f5f5]">
          <button aria-label="收起" className="mt-[290px] w-[3px] h-[82px] bg-[#5c636f]" />
        </div>
        <Drawing />
      </main>
      <Annotations />
      <TornFrame />
    </div>
  );
}
